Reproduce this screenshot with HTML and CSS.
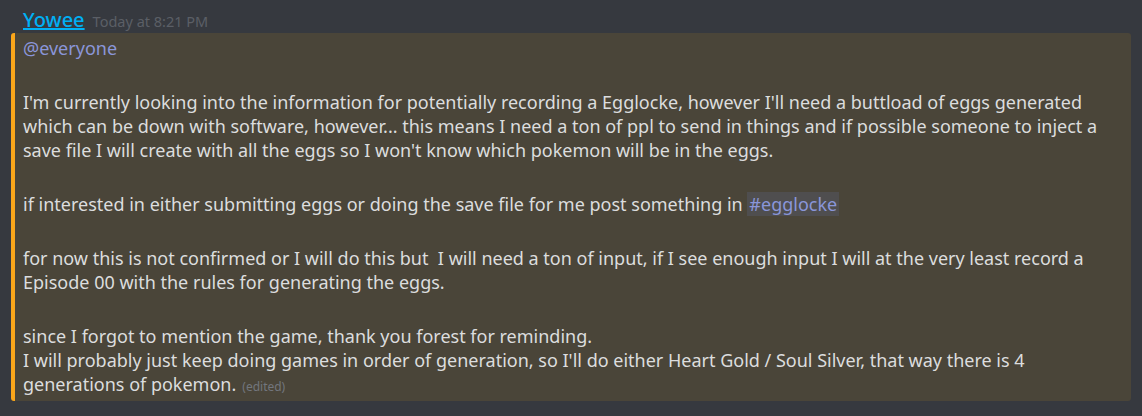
FILE: index.html
```html
<!DOCTYPE html>
<html lang="en">
<head>
  <meta charset="UTF-8" />
  <title>Yowee - egglocke</title>
  <link rel="stylesheet" href="styles.css">
</head>
<body>

<div class="message">
  <div class="message-header">
    <span class="username">Yowee</span>
    <span class="timestamp">Today at 8:21 PM</span>
  </div>

  <div class="message-body">
    <p><span class="mention">@everyone</span></p>
    <p>I'm currently looking into the information for potentially recording a Egglocke, however I'll need a buttload of eggs generated which can be down with software, however... this means I need a ton of ppl to send in things and if possible someone to inject a save file I will create with all the eggs so I won't know which pokemon will be in the eggs.</p>
    <p>if interested in either submitting eggs or doing the save file for me post something in <span class="channel">#egglocke</span></p>
    <p>for now this is not confirmed or I will do this but &nbsp;I will need a ton of input, if I see enough input I will at the very least record a Episode 00 with the rules for generating the eggs.</p>
    <p>since I forgot to mention the game, thank you forest for reminding.<br>I will probably just keep doing games in order of generation, so I'll do either Heart Gold / Soul Silver, that way there is 4 generations of pokemon.<span class="edited">(edited)</span></p>
  </div>
</div>

</body>
</html>
```

FILE: styles.css
```css
body {
  margin: 0;
  background-color: #36393f;
  font-family: 'Noto Sans', sans-serif;
  color: #dcddde;
}

.message {
  padding: 6px 11px 16px 11px;
}

.message-header {
  padding-left: 12px;
  height: 27px;
  display: flex;
  align-items: baseline;
  gap: 8px;
}

.username {
  color: #00b0f4;
  font-size: 20px;
  text-decoration: underline;
  font-weight: 500;
}

.timestamp {
  color: #5b5f66;
  font-size: 14.5px;
}

.message-body {
  background-color: #4a4539;
  border-left: 4px solid #faa61a;
  border-radius: 3px;
  padding: 3px 10px 5px 8px;
  font-size: 18px;
  line-height: 24px;
}

.message-body p {
  margin: 0 0 30px 0;
}

.message-body p:last-child {
  margin-bottom: 0;
}

.mention {
  color: #8a96d9;
}

.channel {
  color: #8a96d9;
  background-color: rgba(114, 137, 218, 0.14);
  padding: 0 2px;
}

.edited {
  color: #72767d;
  font-size: 12px;
  line-height: 1;
  margin-left: 6px;
}
```
